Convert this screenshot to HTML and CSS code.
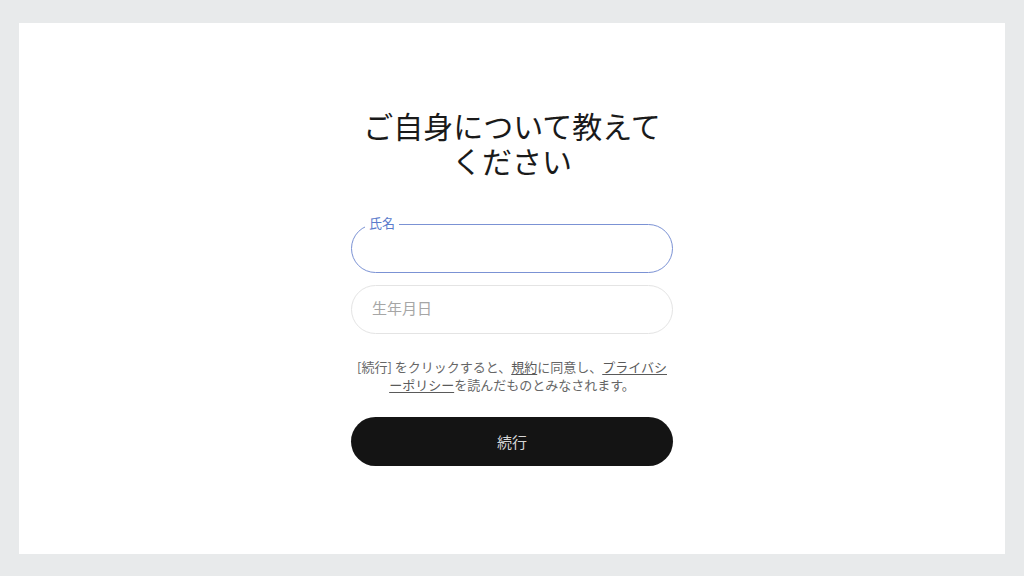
FILE: index.html
```html
<!DOCTYPE html>
<html lang="ja">
<head>
<meta charset="utf-8">
<link rel="stylesheet" href="styles.css">
</head>
<body>
<main class="card">
  <div class="form">
    <h1 class="title">ご自身について教えてください</h1>
    <div class="field field--active">
      <span class="field-label">氏名</span>
    </div>
    <div class="field">
      <span class="placeholder">生年月日</span>
    </div>
    <p class="terms">[続行] をクリックすると、<a class="link">規約</a>に同意し、<a class="link">プライバシーポリシー</a>を読んだものとみなされます。</p>
    <button class="btn">続行</button>
  </div>
</main>
</body>
</html>
```

FILE: styles.css
```css
* { box-sizing: border-box; }
html, body { margin: 0; }
body {
  width: 1024px;
  height: 576px;
  background: #e8eaeb;
  padding: 23px 19px 22px 19px;
  font-family: "Noto Sans CJK JP", "Noto Sans", sans-serif;
}
.card {
  background: #ffffff;
  height: 531px;
  display: flex;
  justify-content: center;
  padding-top: 85px;
}
.form {
  width: 322px;
  display: flex;
  flex-direction: column;
}
.title {
  margin: 0 0 46px;
  font-size: 30px;
  line-height: 35px;
  font-weight: 400;
  color: #1a1a1a;
  text-align: center;
}
.field {
  position: relative;
  height: 49px;
  border: 1px solid #e4e4e4;
  border-radius: 25px;
  display: flex;
  align-items: center;
  padding-left: 20px;
  margin-bottom: 12px;
}
.field--active {
  border: 1.5px solid #7b92d4;
}
.field-label {
  position: absolute;
  left: 13px;
  top: -10px;
  background: #ffffff;
  padding: 0 4px;
  font-size: 13px;
  line-height: 16px;
  color: #5b7ccc;
}
.placeholder {
  font-size: 15px;
  line-height: 20px;
  margin-top: -3px;
  color: #a6a6a6;
}
.terms {
  margin: 12px 0 0;
  font-size: 13px;
  line-height: 18px;
  color: #666666;
  text-align: center;
}
.link {
  color: #5a5a5a;
  text-decoration: underline;
  text-underline-offset: 2px;
}
.btn {
  margin-top: 23px;
  height: 49px;
  border: none;
  border-radius: 25px;
  background: #141414;
  color: #d6d6d6;
  font-family: inherit;
  font-size: 15px;
}
```
